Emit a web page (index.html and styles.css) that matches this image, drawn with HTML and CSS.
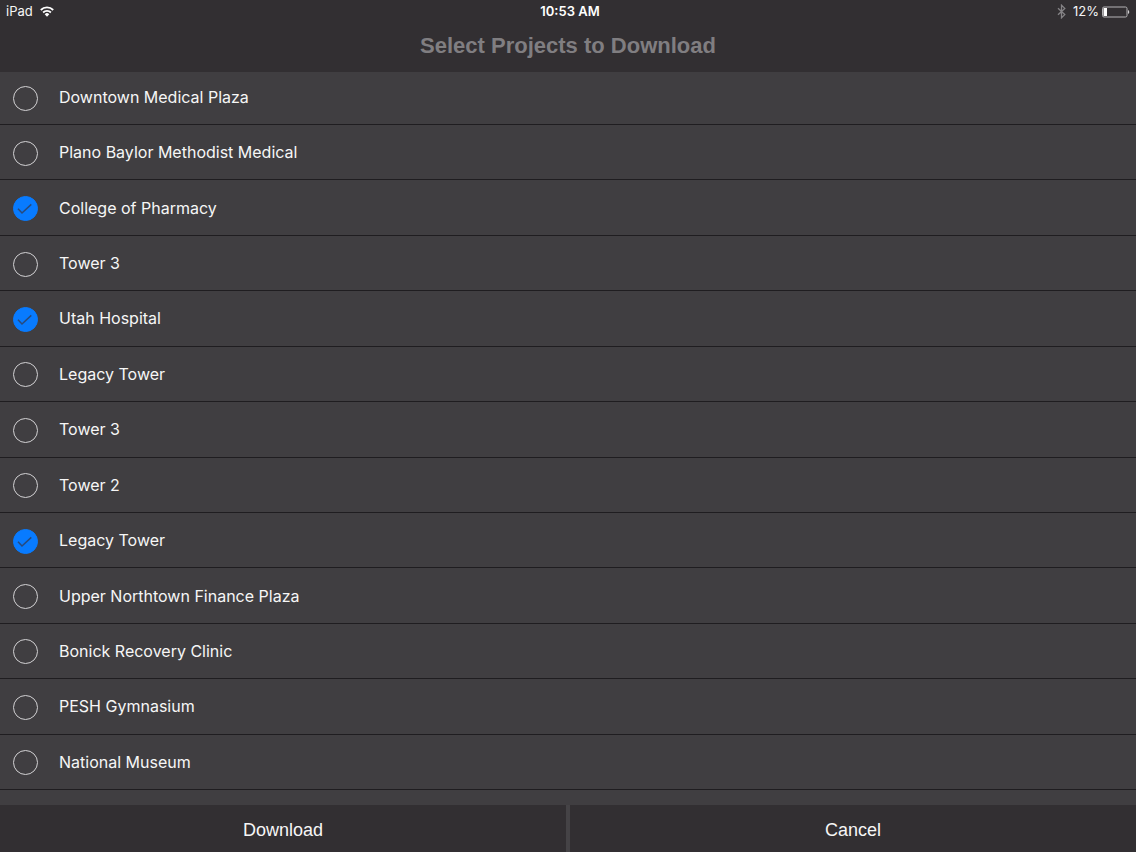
FILE: index.html
```html
<!DOCTYPE html>
<html lang="en">
<head>
<meta charset="utf-8">
<meta name="viewport" content="width=device-width, initial-scale=1">
<title>Select Projects to Download</title>
<link rel="stylesheet" href="styles.css">
</head>
<body>
<form class="screen">
  <header class="header">
    <div class="status">
      <div class="status-left">
        <span>iPad</span>
        <svg class="wifi" viewBox="0 0 14 11" aria-hidden="true"><path d="M.8 4a8.8 8.8 0 0 1 12.4 0M3.1 6.5a5.5 5.5 0 0 1 7.8 0" fill="none" stroke="#fff" stroke-width="1.8"/><path d="M7 10.8 4.7 8.3a3.2 3.2 0 0 1 4.6 0z" fill="#fff"/></svg>
      </div>
      <time class="clock">10:53 AM</time>
      <div class="status-right">
        <svg class="bluetooth" viewBox="0 0 9 15" aria-hidden="true"><path d="M1 4.2 7.8 10.6 4.5 13.8V1.2L7.8 4.4 1 10.8" fill="none" stroke="#858386" stroke-width="1.3"/></svg>
        <span>12%</span>
        <svg class="battery" viewBox="0 0 28 12" aria-hidden="true"><rect x=".5" y="1" width="24.5" height="10" rx="1.5" fill="none" stroke="#b5b4b6"/><rect x="1.5" y="2" width="3.5" height="8" fill="#fff"/><path d="M26 4a2.2 2.2 0 0 1 0 4z" fill="#d0cfd1"/></svg>
      </div>
    </div>
    <h1 class="title">Select Projects to Download</h1>
  </header>
  <ul class="projects">
    <li class="project"><label class="choice"><input class="box" type="checkbox"><svg class="tick" viewBox="0 0 25 25" aria-hidden="true"><path d="m5 12.7 4 4.3 9.3-8.6"/></svg><span class="name">Downtown Medical Plaza</span></label></li>
    <li class="project"><label class="choice"><input class="box" type="checkbox"><svg class="tick" viewBox="0 0 25 25" aria-hidden="true"><path d="m5 12.7 4 4.3 9.3-8.6"/></svg><span class="name">Plano Baylor Methodist Medical</span></label></li>
    <li class="project"><label class="choice"><input class="box" type="checkbox" checked><svg class="tick" viewBox="0 0 25 25" aria-hidden="true"><path d="m5 12.7 4 4.3 9.3-8.6"/></svg><span class="name">College of Pharmacy</span></label></li>
    <li class="project"><label class="choice"><input class="box" type="checkbox"><svg class="tick" viewBox="0 0 25 25" aria-hidden="true"><path d="m5 12.7 4 4.3 9.3-8.6"/></svg><span class="name">Tower 3</span></label></li>
    <li class="project"><label class="choice"><input class="box" type="checkbox" checked><svg class="tick" viewBox="0 0 25 25" aria-hidden="true"><path d="m5 12.7 4 4.3 9.3-8.6"/></svg><span class="name">Utah Hospital</span></label></li>
    <li class="project"><label class="choice"><input class="box" type="checkbox"><svg class="tick" viewBox="0 0 25 25" aria-hidden="true"><path d="m5 12.7 4 4.3 9.3-8.6"/></svg><span class="name">Legacy Tower</span></label></li>
    <li class="project"><label class="choice"><input class="box" type="checkbox"><svg class="tick" viewBox="0 0 25 25" aria-hidden="true"><path d="m5 12.7 4 4.3 9.3-8.6"/></svg><span class="name">Tower 3</span></label></li>
    <li class="project"><label class="choice"><input class="box" type="checkbox"><svg class="tick" viewBox="0 0 25 25" aria-hidden="true"><path d="m5 12.7 4 4.3 9.3-8.6"/></svg><span class="name">Tower 2</span></label></li>
    <li class="project"><label class="choice"><input class="box" type="checkbox" checked><svg class="tick" viewBox="0 0 25 25" aria-hidden="true"><path d="m5 12.7 4 4.3 9.3-8.6"/></svg><span class="name">Legacy Tower</span></label></li>
    <li class="project"><label class="choice"><input class="box" type="checkbox"><svg class="tick" viewBox="0 0 25 25" aria-hidden="true"><path d="m5 12.7 4 4.3 9.3-8.6"/></svg><span class="name">Upper Northtown Finance Plaza</span></label></li>
    <li class="project"><label class="choice"><input class="box" type="checkbox"><svg class="tick" viewBox="0 0 25 25" aria-hidden="true"><path d="m5 12.7 4 4.3 9.3-8.6"/></svg><span class="name">Bonick Recovery Clinic</span></label></li>
    <li class="project"><label class="choice"><input class="box" type="checkbox"><svg class="tick" viewBox="0 0 25 25" aria-hidden="true"><path d="m5 12.7 4 4.3 9.3-8.6"/></svg><span class="name">PESH Gymnasium</span></label></li>
    <li class="project"><label class="choice"><input class="box" type="checkbox"><svg class="tick" viewBox="0 0 25 25" aria-hidden="true"><path d="m5 12.7 4 4.3 9.3-8.6"/></svg><span class="name">National Museum</span></label></li>
  </ul>
  <footer class="actions">
    <button class="action" type="submit">Download</button>
    <button class="action" type="button">Cancel</button>
  </footer>
</form>
</body>
</html>
```
FILE: styles.css
```css
* {
  box-sizing: border-box;
}

body {
  margin: 0;
  background: #403e41;
  color: #f6f6f6;
  font-family: Inter, "Liberation Sans", sans-serif;
}

.screen {
  display: flex;
  flex-direction: column;
  min-height: 100vh;
}

.header {
  padding-bottom: 12px;
  background: #322f32;
}

.status {
  display: grid;
  grid-template-columns: 1fr auto 1fr;
  align-items: center;
  padding: 0 6px;
  font-size: 13px;
  line-height: 23px;
}

.status-left,
.status-right {
  display: flex;
  align-items: center;
}

.status-left {
  gap: 7px;
}

.status-right {
  justify-content: flex-end;
  gap: 3px;
}

.clock {
  padding-left: 4px;
  color: #fff;
  font-weight: 600;
}

.wifi {
  width: 14px;
  height: 11px;
}

.bluetooth {
  width: 9px;
  height: 15px;
  margin-right: 4px;
}

.battery {
  width: 28px;
  height: 12px;
}

.title {
  margin: 0;
  padding-top: 9px;
  color: #807e81;
  font: bold 22px/28px "Liberation Sans", Arial, sans-serif;
  text-align: center;
}

.projects {
  display: grid;
  flex: 1;
  grid-template-rows: 53px repeat(12, minmax(44px, 1fr));
  margin: 0;
  padding: 0 0 15px;
  list-style: none;
}

.project {
  display: grid;
  border-bottom: 1px solid #1f1d20;
}

.choice {
  display: grid;
  grid-template-columns: 25px 1fr;
  align-items: center;
  column-gap: 21px;
  padding: 2px 0 0 13px;
  font-size: 16px;
  line-height: 24px;
}

.project:first-child .choice {
  padding-top: 0;
}

.name {
  padding-bottom: 2px;
}

.box,
.tick {
  grid-row: 1;
  grid-column: 1;
  width: 25px;
  height: 25px;
}

.box {
  margin: 0;
  border: 1px solid #d2d1d3;
  border-radius: 50%;
  appearance: none;
}

.box:checked {
  border-color: #087bff;
  background: #087bff;
}

.tick {
  visibility: hidden;
  fill: none;
  stroke: #284a7c;
  stroke-width: 1.5;
  pointer-events: none;
}

.box:checked + .tick {
  visibility: visible;
}

.actions {
  display: grid;
  grid-template-columns: 1fr 1fr;
  gap: 4px;
  background: #454346;
}

.action {
  height: 47px;
  padding: 2px 0 0;
  border: 0;
  background: #322f32;
  color: #f6f6f6;
  font: 18px/24px "Liberation Sans", Arial, sans-serif;
}
```
